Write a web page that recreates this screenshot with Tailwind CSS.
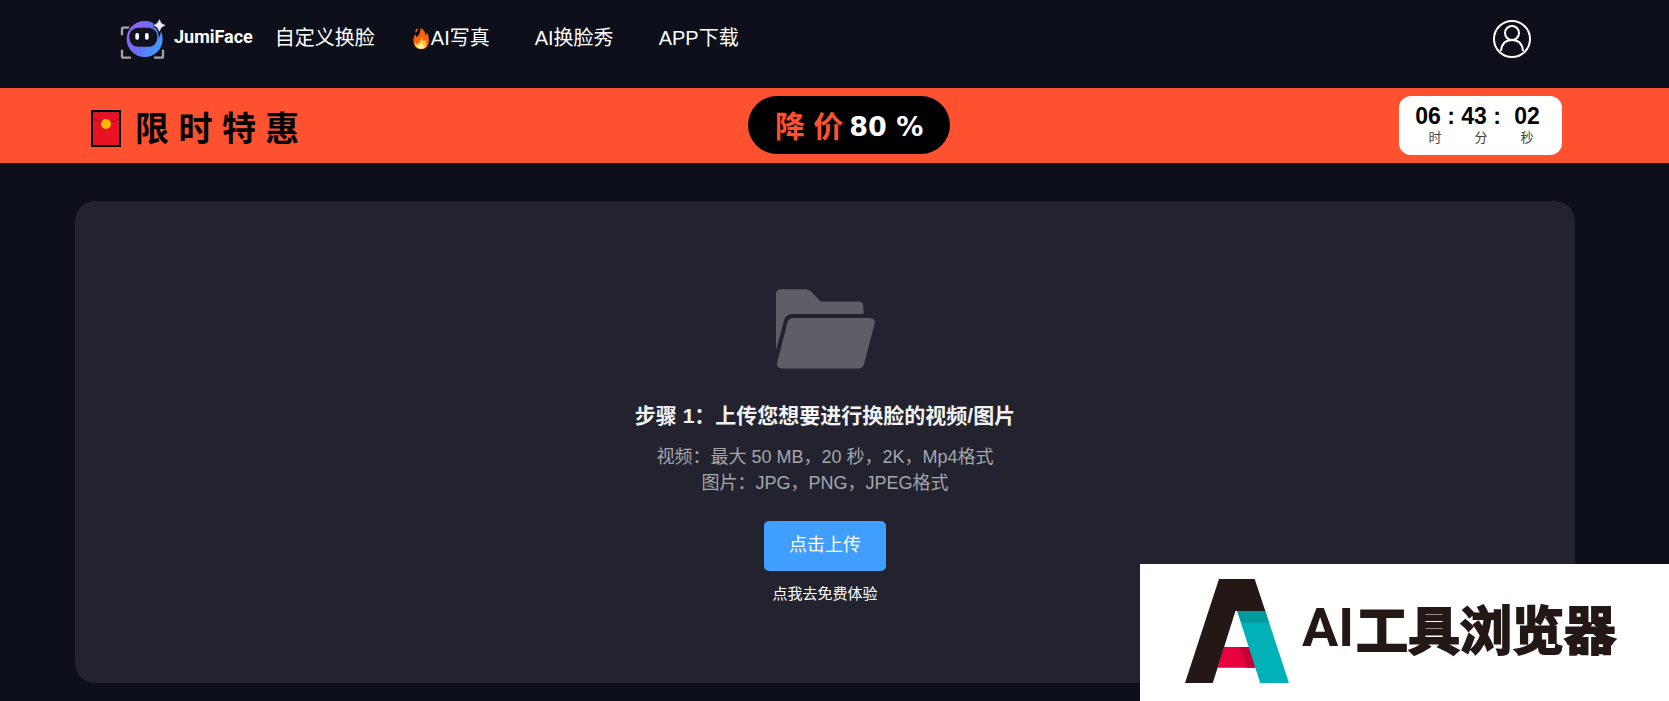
<!DOCTYPE html>
<html lang="zh-CN">
<head>
    <meta charset="UTF-8">
    <meta name="viewport" content="width=device-width, initial-scale=1.0">
    <title>JumiFace</title>
    <script src="https://cdn.jsdelivr.net/npm/@tailwindcss/browser@4"></script>
</head>
<body class="font-['Liberation_Sans','Noto_Sans_CJK_SC',sans-serif] bg-[#0d0f1b] text-white min-h-screen overflow-x-hidden">
    <!-- Header -->
    <header class="flex items-center justify-between pl-[120px] pr-[138px] pt-[19px] pb-[29px]">
        <div class="flex items-center">
            <a href="#" class="flex items-center gap-2 mr-[22px]">
                <svg class="w-[46px] h-10" viewBox="60 55 138 120" fill="none">
                    <defs>
                        <linearGradient id="head" x1="80" y1="80" x2="190" y2="140" gradientUnits="userSpaceOnUse">
                            <stop offset="0" stop-color="#a45cf8"/>
                            <stop offset="0.5" stop-color="#6670fa"/>
                            <stop offset="1" stop-color="#38a4ff"/>
                        </linearGradient>
                    </defs>
                    <path d="M66 104V84q0-3 3-3h24M66 147v21q0 3 3 3h24M189 147v21q0 3-3 3h-24" stroke="#a3a4a8" stroke-width="7"/>
                    <circle cx="134" cy="115" r="58" fill="#0d0f1b"/>
                    <circle cx="134" cy="115" r="54" fill="url(#head)"/>
                    <rect x="88" y="81" width="84" height="57" rx="26" fill="#10111e"/>
                    <rect x="106" y="97" width="11" height="20" rx="5" fill="#fff"/>
                    <rect x="135" y="97" width="11" height="20" rx="5" fill="#fff"/>
                    <path d="M178 57q4 14 17 17q-13 3-17 18q-4-15-17-18q13-3 17-17z" stroke="#0d0f1b" stroke-width="10"/>
                    <path d="M178 57q4 14 17 17q-13 3-17 18q-4-15-17-18q13-3 17-17z" fill="#f1eefc" stroke="#f1eefc" stroke-width="2"/>
                </svg>
                <span class="font-['Roboto',sans-serif] font-bold text-lg leading-9 pb-1">JumiFace</span>
            </a>
            <nav class="flex items-center gap-[38px] pb-[2px] text-xl leading-9">
                <a href="#">自定义换脸</a>
                <a href="#" class="flex items-center gap-[2px] mr-[7px]">
                    <svg class="w-4 h-[21px]" viewBox="36 82 48 63">
                        <path d="M58 82q15 6 15 22q4-2 4-9q7 10 7 23q0 27-24 27q-23 0-23-26q0-10 6-18q1 6 5 8q12-12 10-27z" fill="#f7630c"/>
                        <path d="M46 84l5 2q-1 8-8 10q-1-7 3-12z" fill="#f7630c"/>
                        <path d="M62 108q1 9 7 14l5-5q8 27-13 28q-21-1-19-21q3 6 8 6q10-8 12-22z" fill="#ffc83d"/>
                        <path d="M61 127q2 6 9 8q-1 9-10 9t-11-9q9-2 12-8z" fill="#fff3b0"/>
                    </svg>
                    <span>AI写真</span>
                </a>
                <a href="#" class="mr-[7px]">AI换脸秀</a>
                <a href="#">APP下载</a>
            </nav>
        </div>
        <button type="button" aria-label="个人中心">
            <svg class="w-[38px] h-[38px]" viewBox="0 0 38 38" fill="none" stroke="#fff" stroke-width="2">
                <circle cx="19" cy="19" r="18"/>
                <circle cx="19" cy="13" r="7"/>
                <path d="M8 31q1-11 11-11t11 11"/>
            </svg>
        </button>
    </header>

    <!-- Sale banner -->
    <section class="flex items-start justify-between h-[75px] bg-[#fd5130] pt-2 pl-[91px] pr-[107px]">
        <div class="flex items-center gap-[14px] pt-[6px] text-black">
            <svg class="w-[30px] h-[37px]" viewBox="0 0 30 37">
                <rect x="1" y="1" width="28" height="35" fill="#e81224" stroke="#000" stroke-width="2"/>
                <path d="M2 3h26" stroke="#a4262c"/>
                <path d="M2 9l13 5l13-5" fill="none" stroke="#a80d1c"/>
                <circle cx="15" cy="14" r="5" fill="#ffb900"/>
            </svg>
            <h2 class="text-[34px] leading-[50px] font-bold pt-[2px]">限 时 特 惠</h2>
        </div>
        <div class="flex items-center gap-[6px] h-[58px] rounded-full bg-black px-[27px] pt-[3px] font-bold">
            <span class="text-[30px] leading-10 text-[#fd5130]">降 价</span>
            <span class="font-['DejaVu_Sans',sans-serif] text-[27px] leading-10">80 %</span>
        </div>
        <div class="grid grid-cols-[46px_46px_46px] h-[59px] pl-[13px] pr-3 pt-[6px] rounded-xl bg-white text-center text-black">
            <div>
                <div class="text-[23px] leading-7 font-bold">06 :</div>
                <div class="text-[13px] leading-4 text-[#444]">时</div>
            </div>
            <div>
                <div class="text-[23px] leading-7 font-bold">43 :</div>
                <div class="text-[13px] leading-4 text-[#444]">分</div>
            </div>
            <div>
                <div class="text-[23px] leading-7 font-bold">02</div>
                <div class="text-[13px] leading-4 text-[#444]">秒</div>
            </div>
        </div>
    </section>

    <!-- Upload card -->
    <main class="pl-[75px] pr-[94px] pt-[38px] pb-[18px]">
        <div class="flex flex-col items-center rounded-[20px] bg-[#22232f] pt-[88px] pb-[77px] text-center">
            <svg class="w-[99px] h-20" viewBox="105 57 298 240" fill="#5e5e68">
                <path d="M105 240V72Q105 57 120 57H195Q205 57 212 65L239 94H352Q368 94 368 110V132H155Q134 132 129 152Z"/>
                <path d="M156 144H388Q405 146 402 160L370 283Q366 296 352 296H122Q106 294 108 280L140 156Q144 144 156 144Z"/>
            </svg>
            <h1 class="mt-[31px] text-[21px] leading-8 font-bold text-[#f2f2f3]">步骤 1：上传您想要进行换脸的视频/图片</h1>
            <p class="mt-3 text-lg leading-[26px] text-[#a5a5aa]">视频：最大 50 MB，20 秒，2K，Mp4格式<br>图片：JPG，PNG，JPEG格式</p>
            <button type="button" class="mt-[25px] h-[50px] px-[25px] pb-[2px] rounded-[5px] bg-[#409eff] text-lg leading-6">点击上传</button>
            <a href="#" class="mt-[11px] text-[15px] leading-6">点我去免费体验</a>
        </div>
    </main>

    <!-- Corner brand -->
    <aside class="fixed right-0 bottom-0 flex items-start h-[137px] bg-white pl-[45px] pr-[53px] pt-[15px] text-[#231815]">
        <svg class="w-[104px] h-[104px] mr-[13px]" viewBox="160 72 303 313" preserveAspectRatio="none">
            <path d="M273 277h90v62H255z" fill="#e8003f"/>
            <path d="M320 277h30l18 62h-28z" fill="#c40036"/>
            <path d="M312 168h82l69 217h-84z" fill="#00b2b8"/>
            <path d="M312 168h82l11 36h-81z" fill="#009a9e"/>
            <path d="M259 72h104l31 96h-87L241 385H160z" fill="#231815"/>
        </svg>
        <div class="flex items-center gap-[2px] pt-[3px] font-bold">
            <span class="font-['Roboto',sans-serif] text-[54px] leading-[92px]">AI</span>
            <span class="font-['Noto_Sans_CJK_SC',sans-serif] text-[52px] leading-[92px] [-webkit-text-stroke:2px_#231815]">工具浏览器</span>
        </div>
    </aside>
</body>
</html>
